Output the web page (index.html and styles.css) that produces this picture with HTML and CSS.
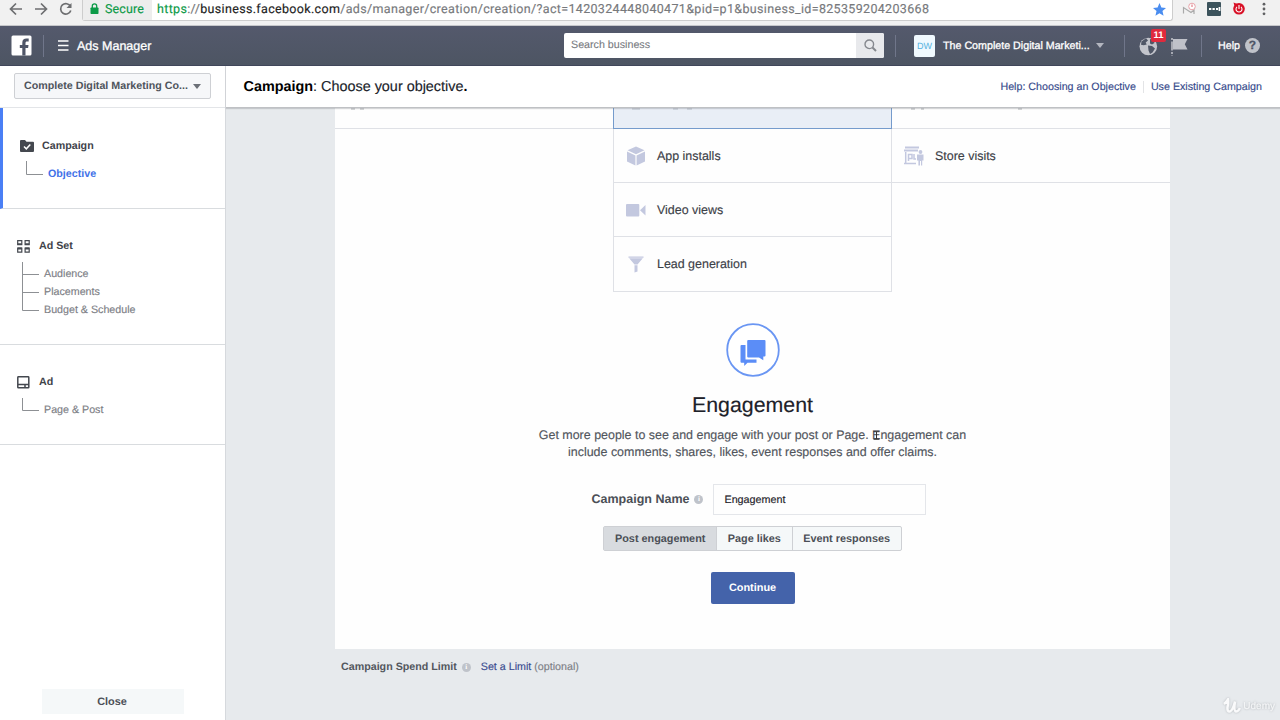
FILE: index.html
```html
<!DOCTYPE html>
<html lang="en">
<head>
<meta charset="utf-8">
<title>Ads Manager</title>
<link rel="stylesheet" href="styles.css">
</head>
<body>
<div class="app">
  <div class="browser">
    <svg class="nav-icons" width="82" height="22" viewBox="0 0 82 22" fill="none" stroke="#6d6e70" stroke-width="1.7">
      <path d="M22 9H11M16 3.5L10.500 9L16 14.500M35 9H46M41 3.500L46.500 9L41 14.500"/>
      <path d="M70.500 6.500A5.200 5.200 0 1 0 70.800 10.500"/><path d="M71.500 3V8H66.500Z" fill="#6d6e70" stroke="none"/>
    </svg>
    <div class="omnibox">
      <div class="secure">
        <svg width="9" height="12" viewBox="0 0 9 12"><rect x=".5" y="4.500" width="8" height="6.500" rx=".7" fill="#0c9a47"/><path d="M2.300 5V3a2.200 2.200 0 0 1 4.400 0V5" fill="none" stroke="#0c9a47" stroke-width="1.300"/></svg>
        <span class="secure-text">Secure</span>
      </div>
      <span class="url"><span class="scheme">https</span>://<span class="host">business.facebook.com</span>/ads/manager/creation/creation/?act=1420324448040471&amp;pid=p1&amp;business_id=825359204203668</span>
      <svg class="star" width="13" height="13" viewBox="0 0 24 24"><path fill="#4a8df0" d="M12 0l3.500 8.300 8.500.7-6.500 5.700 2 8.800L12 18.800 4.500 23.500l2-8.800L0 9l8.500-.7z"/></svg>
    </div>
    <svg class="extensions" width="106" height="22" viewBox="0 0 106 22">
      <path d="M10.500 13.500V7.500L18 12.500L21 10V14" fill="none" stroke="#aaa" stroke-width="1.200"/><circle cx="19" cy="6.500" r="3.300" fill="#fff" stroke="#e8a4aa"/><path d="M19 4.500V7" stroke="#dc6670"/>
      <rect x="34" y="2" width="14" height="14" rx="1" fill="#3c535c"/><path d="M36 9h2.300M39.500 9h2.300M43 9h2M46.500 7v4" stroke="#fff" stroke-width="1.800"/>
      <circle cx="66" cy="8.800" r="5.800" fill="#d81026"/><path d="M60.500 2.500l4 1.500-3 2z" fill="#d81026"/><path d="M64 6.800a3 3 0 1 0 4 0M66 5v4" fill="none" stroke="#fff" stroke-width="1.100"/>
      <circle cx="91" cy="4.200" r="1.400" fill="#5f6062"/><circle cx="91" cy="9" r="1.400" fill="#5f6062"/><circle cx="91" cy="13.800" r="1.400" fill="#5f6062"/>
    </svg>
  </div>

  <div class="topbar">
    <svg class="logo" width="21" height="21" viewBox="0 0 21 21"><rect x=".5" y=".5" width="20" height="20" rx="1.500" fill="#fff"/><path d="M11.300 20.500V13H8.800V10h2.500V7.800C11.300 5 12.900 3.600 15.500 3.600H17.700V6.600H16C14.900 6.600 14.500 7.200 14.500 8.100V10h3l-.4 3h-2.600v7.500z" fill="#4f5668"/></svg>
    <i class="rule rule-a"></i>
    <svg class="burger" width="11" height="11" viewBox="0 0 11 11"><path d="M0 1h10.500M0 5.500h10.500M0 10h10.500" stroke="#fff" stroke-width="1.400"/></svg>
    <span class="brand">Ads Manager</span>
    <div class="search"><span class="search-text">Search business</span><span class="search-button"><svg width="13" height="13" viewBox="0 0 13 13" fill="none" stroke="#85888e" stroke-width="1.400"><circle cx="5.300" cy="5.300" r="4.300"/><path d="M8.500 8.500L12 12" stroke-width="2"/></svg></span></div>
    <i class="rule rule-b"></i>
    <span class="avatar">DW</span>
    <span class="business">The Complete Digital Marketi...</span>
    <i class="caret caret-light"></i>
    <i class="rule rule-c"></i>
    <div class="alerts">
      <svg width="50" height="22" viewBox="0 0 50 22"><circle cx="9.300" cy="11.500" r="8.800" fill="#c3c5cc"/><path d="M2.500 6.500L7 3.300l2 2.200-2.300 2 1 2-3 .8-2.700-.6zM11 4l3.500 1 1 3-2.500 1.500-2-1zM9 10.500l4 .5 3 2.500-2.500 4-2.500 1.500-1.500-3.500z" fill="#505767"/><path d="M33 3v18" stroke="#c3c5cc" stroke-width="1.500" stroke-dasharray="2 1.500 9 1.500"/><path d="M34 4H48.500L45.800 9.300L48.500 14.500H34z" fill="#bfc1c9"/></svg>
      <span class="badge">11</span>
    </div>
    <i class="rule rule-d"></i>
    <span class="help">Help</span>
    <span class="question">?</span>
  </div>

  <div class="workspace">
    <aside class="sidebar">
      <div class="account-row"><div class="account"><span>Complete Digital Marketing Co...</span><i class="caret"></i></div></div>
      <section class="step step-active">
        <div class="step-title"><svg class="folder" width="14" height="12" viewBox="0 0 14 12"><path d="M0 1Q0 0 1 0H5L6.500 1.700H13Q14 1.700 14 2.700V11Q14 12 13 12H1Q0 12 0 11z" fill="#44484f"/><path d="M4 6.500L6.300 8.800L10.300 4.500" stroke="#fff" stroke-width="1.500" fill="none"/></svg><b>Campaign</b></div>
        <div class="branch"><svg width="18" height="16" viewBox="0 0 18 16"><path d="M.5 0V13.500H17" fill="none" stroke="#8d9094"/></svg><div class="links"><b class="current">Objective</b></div></div>
      </section>
      <section class="step step-set">
        <div class="step-title"><svg width="13" height="13" viewBox="0 0 13 13" fill="none" stroke="#44484f" stroke-width="1.200"><path d="M.7 .7h4.100v3.900H.7zM8.100 .7h4.100v3.900H8.100zM.7 8h4.100v4.200H.7zM8.100 8h4.100v4.200H8.100z"/><path d="M.7 4.100h4.100M8.100 4.100h4.100M.7 8.500h4.100M8.100 8.500h4.100" stroke-width="1.800"/></svg><b>Ad Set</b></div>
        <div class="branch"><svg width="18" height="50" viewBox="0 0 18 50"><path d="M.5 0V48.500H17M0 12.500H17M0 30.500H17" fill="none" stroke="#8d9094"/></svg><div class="links"><span>Audience</span><span>Placements</span><span>Budget &amp; Schedule</span></div></div>
      </section>
      <section class="step step-ad">
        <div class="step-title"><svg width="13" height="13" viewBox="0 0 13 13" fill="none" stroke="#44484f" stroke-width="1.500"><rect x=".8" y=".8" width="11" height="11" rx=".6"/><path d="M1 8.500h11M8 8.500V12"/></svg><b>Ad</b></div>
        <div class="branch"><svg width="18" height="16" viewBox="0 0 18 16"><path d="M.5 0V12.500H17" fill="none" stroke="#8d9094"/></svg><div class="links"><span>Page &amp; Post</span></div></div>
      </section>
      <div class="close">Close</div>
    </aside>

    <main class="main">
      <header class="heading">
        <h1><b>Campaign</b>: Choose your objective<b>.</b></h1>
        <div class="heading-links"><a>Help: Choosing an Objective</a><a>Use Existing Campaign</a></div>
      </header>
      <div class="panel">
        <div class="objectives">
          <div class="column">
            <div class="cell cell-cut"><svg width="40" height="3" viewBox="0 0 40 3"><path d="M16 1h4M25 1h4" stroke="#aeb1b6"/></svg></div>
          </div>
          <div class="column column-middle">
            <div class="cell cell-cut cell-selected"><svg width="100" height="3" viewBox="0 0 100 3"><path d="M18 1h8M59 1h5M73 1h5" stroke="#b6bdc9"/></svg></div>
            <div class="cell"><svg width="20" height="20" viewBox="0 0 20 20" fill="#c3c8df"><path d="M10 .5L18.500 4.200L10 8.200L1.500 4.200zM1 5.500L9.400 9.500V19.500L1 15.500zM19 5.500L10.600 9.500V19.500L19 15.500z"/></svg><span>App installs</span></div>
            <div class="cell"><svg width="20" height="20" viewBox="0 0 20 20" fill="#c3c8df"><rect x="0" y="4" width="13.300" height="12.500" rx="1"/><path d="M14 10.200L19.500 5V15.500z"/></svg><span>Video views</span></div>
            <div class="cell"><svg width="20" height="20" viewBox="0 0 20 20" fill="#c3c8df"><path d="M2.500 2.500H17.500V3.800H2.500zM3.200 4.300H16.800L11.500 10.500H8.500zM8.500 11.300H11.500V17.500L8.500 18.500z"/></svg><span>Lead generation</span></div>
          </div>
          <div class="column column-right">
            <div class="cell cell-cut"><svg width="130" height="3" viewBox="0 0 130 3"><path d="M19 1h4M29 1h3M126 1h4" stroke="#aeb1b6"/></svg></div>
            <div class="cell"><svg width="20" height="20" viewBox="0 0 20 20" fill="none" stroke="#c3c8df" stroke-width="1.500"><path d="M1 1.500H15M0 4.500H14" stroke-width="2"/><path d="M1.700 6V17M0 17.500H12M4.500 15V8.500H8V12.500H4.500M10 8V13H12"/><circle cx="16.500" cy="6" r="1.900" fill="#c3c8df" stroke="none"/><path d="M13 8.500h6.500v6h-1.300V19.500h-1.200V15h-1v4.500h-1.600V14.500H13z" fill="#c3c8df" stroke="none"/></svg><span>Store visits</span></div>
          </div>
        </div>
        <div class="detail">
          <svg class="emblem" width="54" height="54" viewBox="0 0 54 54"><circle cx="27" cy="27" r="25.800" fill="#fff" stroke="#6a96f3" stroke-width="1.800"/><path d="M15.500 22H19.500V36.500H30.500V39.700H21.500L18.200 43V39.700H15.500Q14.500 39.700 14.500 38.700V23Q14.500 22 15.500 22z" fill="#5b8df7"/><path d="M22.200 17H38.500Q39.500 17 39.500 18V32.500Q39.500 33.500 38.500 33.500H37.300V37.300L33 34.500H22.200Q21.200 34.500 21.200 33.500V18Q21.200 17 22.200 17z" fill="#5b8df7"/></svg>
          <h2>Engagement</h2>
          <p>Get more people to see and engage with your post or Page. <span class="pointed">E<svg class="ibeam" width="7" height="9" viewBox="0 0 7 9"><path d="M.5 .7H6.500M.5 8.300H6.500M3.500 1V8" stroke="#333" stroke-width="1"/></svg></span>ngagement can<br>include comments, shares, likes, event responses and offer claims.</p>
          <div class="name-row"><b>Campaign Name</b><i class="info">i</i><div class="field">Engagement</div></div>
          <div class="tabs"><span class="tab tab-on">Post engagement</span><span class="tab">Page likes</span><span class="tab">Event responses</span></div>
          <div class="continue">Continue</div>
        </div>
      </div>
      <div class="limit"><b>Campaign Spend Limit</b><i class="info">i</i><a>Set a Limit</a><span>(optional)</span></div>
      <div class="watermark"><svg width="18" height="16" viewBox="0 0 18 16"><path d="M1 6Q3.500 4 5 1.500Q5.500 5 4.500 9Q4 14 7 13.500Q10 12 12 3.500Q10.500 13 13 13.500Q15 13.500 17 10" fill="none" stroke="#fff" stroke-width="2.500"/></svg><span>Udemy</span></div>
    </main>
  </div>
</div>
</body>
</html>
```
FILE: styles.css
```css
* { box-sizing: border-box; }
body {
  margin: 0;
  width: 1280px;
  height: 720px;
  overflow: hidden;
  font-family: "Liberation Sans", Arial, sans-serif;
  font-size: 10.7px;
  color: #4b4f56;
  text-rendering: geometricPrecision;
  -webkit-text-stroke: .15px;
}
svg { display: block; flex: none; }
h1, h2, p { margin: 0; font-weight: normal; }
b { -webkit-text-stroke: 0; }
.app { display: flex; flex-direction: column; height: 720px; }

.browser { display: flex; height: 26px; background: #f1f1f1; border-bottom: 1px solid #c6c7ca; flex: none; }
.omnibox { display: flex; width: 1091px; height: 21px; background: #fff; border: 1px solid #cdcdcd; border-top: 0; border-radius: 0 0 3px 3px; font: 12.5px Roboto, sans-serif; line-height: 19px; }
.secure { display: flex; align-items: center; width: 69px; padding: 0 0 2px 7px; background: #ededed; color: #0c9a47; }
.secure-text { margin-left: 6px; letter-spacing: .15px; }
.url { margin-left: 5px; width: 772px; white-space: nowrap; color: #77797c; letter-spacing: .335px; line-height: 19px; }
.scheme { color: #0c9a47; }
.host { color: #222; }
.star { margin: 3px 0 0 224px; }

.topbar { display: flex; align-items: center; height: 40px; padding-left: 11px; flex: none; background: linear-gradient(#54596c, #4d5563); border-bottom: 1px solid #40465a; color: #fff; -webkit-text-stroke: .3px; }
.rule { width: 1px; height: 22px; background: #70768a; flex: none; }
.rule-a { margin-left: 11px; }
.burger { margin-left: 14px; }
.brand { margin-left: 8px; width: 487px; font-size: 12.5px; }
.search { display: flex; width: 320px; height: 25px; border-radius: 2px; overflow: hidden; background: #fff; color: #777a80; line-height: 25px; }
.search-text { flex: 1; padding-left: 7px; -webkit-text-stroke: .1px; }
.search-button { display: flex; align-items: center; justify-content: center; width: 28px; background: #e8e9ec; }
.rule-b { margin-left: 11px; }
.avatar { width: 21px; height: 22px; margin-left: 18px; border-radius: 2px; background: #f0f9fe; color: #55b3de; font-size: 9px; line-height: 23px; text-align: center; -webkit-text-stroke: 0; }
.business { width: 147px; margin-left: 8px; white-space: nowrap; }
.caret { width: 0; height: 0; border: 4.500px solid transparent; border-top: 5px solid #6c7077; border-bottom: 0; flex: none; }
.caret-light { margin-left: 6px; border-top-color: #b3b6bf; }
.rule-c { margin-left: 20px; }
.alerts { position: relative; width: 50px; margin-left: 14px; }
.badge { position: absolute; left: 12px; top: -6px; width: 15px; height: 13px; border-radius: 2px; background: #e02a3d; font-size: 9.500px; font-weight: bold; line-height: 13px; text-align: center; -webkit-text-stroke: 0; }
.rule-d { margin-left: 12px; }
.help { width: 27px; margin-left: 16px; }
.question { width: 15px; height: 15px; border-radius: 50%; background: #c0c3ca; color: #4e5566; font-size: 12px; font-weight: bold; line-height: 15px; text-align: center; }

.workspace { display: flex; flex: 1; min-height: 0; }
.sidebar { width: 226px; background: #fff; border-right: 1px solid #d6d9dd; display: flex; flex-direction: column; flex: none; }
.account-row { height: 42px; padding: 7px 0 0 14px; border-bottom: 1px solid #e3e5e8; flex: none; }
.account { display: flex; align-items: center; justify-content: space-between; width: 197px; height: 26px; padding: 0 9px; border: 1px solid #ced0d4; border-radius: 2px; background: #f6f7f9; font-weight: bold; color: #4f545c; white-space: nowrap; -webkit-text-stroke: 0; }
.step { flex: none; border-bottom: 1px solid #d9dcdf; }
.step-title { display: flex; align-items: center; height: 14px; color: #3f434a; }
.step-title b { margin-left: 9px; }
.branch { display: flex; color: #7d8086; }
.links { display: flex; flex-direction: column; line-height: 18px; margin-left: 4px; }
.step-active { height: 101px; padding: 31px 0 0 17px; border-left: 3px solid #4a7ff5; }
.step-active .step-title b { margin-left: 8px; }
.step-active .branch { padding: 8px 0 0 6px; }
.current { color: #4272e8; margin-top: 4px; }
.step-set { height: 136px; padding: 30px 0 0 17px; }
.step-set .branch { padding: 9px 0 0 5px; }
.step-set .links { margin-top: 3px; }
.step-ad { height: 100px; padding: 30px 0 0 17px; }
.step-ad .branch { padding: 9px 0 0 5px; }
.step-ad .links { margin-top: 3px; }
.close { width: 142px; height: 25px; margin: auto 0 6px 42px; padding-right: 2px; background: #f5f8f9; color: #4b4f56; font-weight: bold; font-size: 10.900px; line-height: 26px; text-align: center; -webkit-text-stroke: 0; }

.main { display: flex; flex-direction: column; flex: 1; background: #e7eaed; position: relative; }
.heading { display: flex; align-items: center; justify-content: space-between; height: 42px; padding: 0 18px 0 17px; background: #fff; border-bottom: 1px solid #bfc1c4; box-shadow: 0 1px 1px rgba(120, 124, 130, .3); flex: none; z-index: 1; }
.heading h1 { font-size: 14.400px; color: #20232a; padding-left: 0.500px; }
.heading b { color: #000; }
.heading-links { display: flex; color: #374b8c; }
.heading-links a + a { margin-left: 7px; padding-left: 7px; border-left: 1px solid #e3e4e6; }
.panel { width: 835px; height: 541px; margin-left: 109px; background: #fefefe; flex: none; }
.objectives { display: grid; grid-template-columns: 278px 279px 278px; align-items: start; height: 184px; font-size: 12.450px; color: #3c4047; }
.cell { display: flex; align-items: center; height: 54px; padding: 0 0 0 12px; border-bottom: 1px solid #dfe1e6; }
.cell span { margin-left: 11px; }
.cell-cut { height: 21px; padding: 0; align-items: flex-start; }
.column-middle .cell { border-left: 1px solid #dfe1e6; border-right: 1px solid #dfe1e6; }
.column-middle .cell:last-child { height: 55px; }
.column-middle .cell-selected { background: #e9eef6; border-color: #759bcc; }

.detail { display: flex; flex-direction: column; align-items: center; }
.emblem { margin-top: 31px; }
.detail h2 { margin-top: 14px; font-size: 21.350px; line-height: 28px; color: #1d2129; }
.detail p { margin-top: 8px; font-size: 12.450px; line-height: 17px; text-align: center; white-space: nowrap; color: #51555c; }
.pointed { position: relative; }
.ibeam { position: absolute; left: 1px; top: 3px; }
.name-row { display: flex; align-items: center; margin: 23px 0 0 13px; height: 31px; font-size: 12.500px; }
.name-row b { padding-bottom: 1px; }
.info { width: 9px; height: 9px; margin-left: 5px; border-radius: 50%; background: #bfc3ca; color: #fff; font: bold 7px/9px "Liberation Serif", serif; text-align: center; -webkit-text-stroke: 0; }
.field { width: 213px; height: 31px; margin-left: 10px; padding-left: 10px; border: 1px solid #e4e6ea; font-size: 10.750px; line-height: 30px; color: #1d2129; }
.tabs { display: flex; margin-top: 11px; height: 25px; border: 1px solid #ced0d4; border-radius: 2px; font-weight: bold; font-size: 10.850px; line-height: 24px; background: #f5f8f9; -webkit-text-stroke: 0; }
.tab { padding: 0 10.700px; border-left: 1px solid #ced0d4; white-space: nowrap; }
.tab-on { background: #d8dbdf; border-left: 0; }
.continue { width: 84px; height: 32px; margin-top: 21px; border-radius: 2px; background: #4463aa; color: #fff; font-weight: bold; font-size: 10.900px; line-height: 33px; text-align: center; -webkit-text-stroke: 0; }

.limit { display: flex; align-items: center; height: 20px; margin: 8px 0 0 115px; color: #7e8187; }
.limit b { color: #53575d; }
.limit a { margin: 0 3px 0 10px; color: #3b4c90; }
.watermark { position: absolute; right: 5px; bottom: 6px; display: flex; align-items: center; color: #f8f9fa; font-size: 10px; filter: drop-shadow(0 0 1px #a4a8ad); opacity: .8; }
.watermark span { margin-left: 2px; }
```
